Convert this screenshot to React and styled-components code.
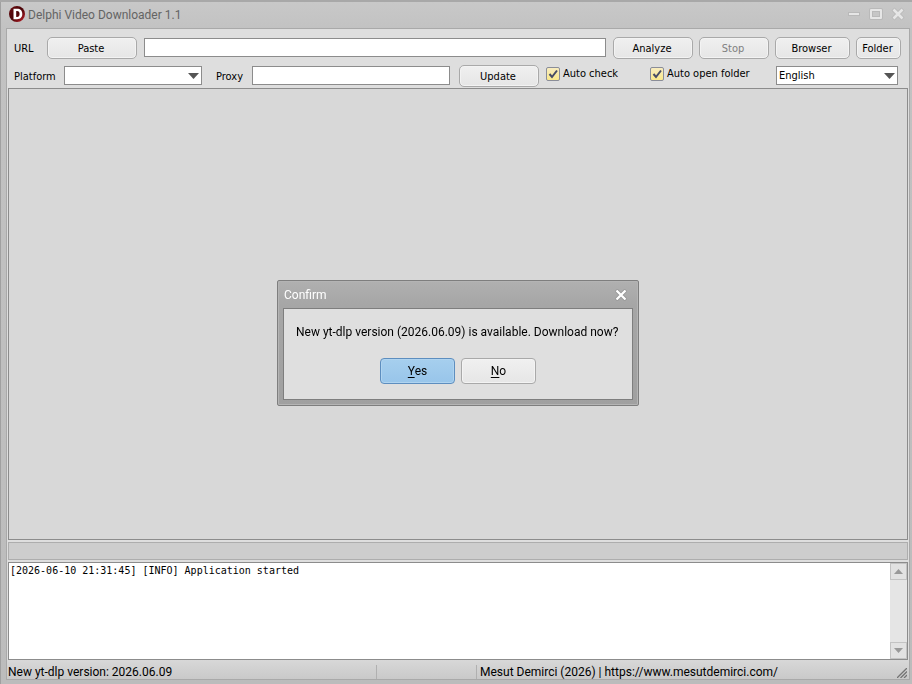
import React, { useState } from 'react';
import styled, { createGlobalStyle } from 'styled-components';

const App = () => {
  const [confirmOpen, setConfirmOpen] = useState(true);

  return (
    <Frame>
      <GlobalStyle />
      <TitleBar>
        <LogoIcon />
        <Title>Delphi Video Downloader 1.1</Title>
        <WindowButtons />
      </TitleBar>
      <Client>
        <Toolbar />
        <VideoList />
        <ProgressBar />
        <Log />
        <StatusBar>
          <StatusText>New yt-dlp version: 2026.06.09</StatusText>
          <StatusGap />
          <StatusCredit>
            Mesut Demirci (2026) | https://www.mesutdemirci.com/
          </StatusCredit>
          <SizeGrip />
        </StatusBar>
      </Client>
      {confirmOpen && <ConfirmDialog onClose={() => setConfirmOpen(false)} />}
    </Frame>
  );
};

export default App;

const Toolbar = () => (
  <Tools>
    <UrlRow>
      <ToolLabel htmlFor="url" $width={27}>
        URL
      </ToolLabel>
      <Button $width={90}>Paste</Button>
      <UrlInput id="url" type="text" />
      <Button $width={80}>Analyze</Button>
      <Button $width={70} disabled>
        Stop
      </Button>
      <Button $width={75}>Browser</Button>
      <Button $width={45}>Folder</Button>
    </UrlRow>
    <OptionRow>
      <ToolLabel htmlFor="platform" $width={50}>
        Platform
      </ToolLabel>
      <PlatformBox>
        <Select id="platform" defaultValue="">
          <option value="" aria-label="Any platform" />
        </Select>
        <ArrowIcon />
      </PlatformBox>
      <ToolLabel htmlFor="proxy" $width={36}>
        Proxy
      </ToolLabel>
      <ProxyInput id="proxy" type="text" />
      <Button $width={80}>Update</Button>
      <CheckOption $width={97}>
        <CheckBox type="checkbox" defaultChecked />
        <CheckIcon />
        Auto check
      </CheckOption>
      <CheckOption $width={110}>
        <CheckBox type="checkbox" defaultChecked />
        <CheckIcon />
        Auto open folder
      </CheckOption>
      <LanguageBox>
        <Select aria-label="Language" defaultValue="English">
          <option>English</option>
        </Select>
        <ArrowIcon />
      </LanguageBox>
    </OptionRow>
  </Tools>
);

const Log = () => (
  <LogBox>
    <LogText
      aria-label="Log"
      readOnly
      value="[2026-06-10 21:31:45] [INFO] Application started"
    />
    <ScrollBar>
      <ScrollButton aria-label="Scroll up">
        <svg width="9" height="5" viewBox="0 0 9 5">
          <path d="M4.5 0L9 5H0z" fill="#999" />
        </svg>
      </ScrollButton>
      <ScrollButton aria-label="Scroll down">
        <svg width="9" height="5" viewBox="0 0 9 5">
          <path d="M4.5 5L9 0H0z" fill="#999" />
        </svg>
      </ScrollButton>
    </ScrollBar>
  </LogBox>
);

const ConfirmDialog = ({ onClose }) => (
  <Overlay>
    <Dialog role="dialog" aria-labelledby="confirm-title">
      <DialogHeader>
        <DialogTitle id="confirm-title">Confirm</DialogTitle>
        <DialogClose aria-label="Close" onClick={onClose}>
          <svg width="12" height="12" viewBox="0 0 12 12">
            <path d="M1 1l10 10M11 1L1 11" stroke="#8c8c8c" strokeWidth="4" opacity="0.6" />
            <path d="M1.5 1.5l9 9M10.5 1.5l-9 9" stroke="#fff" strokeWidth="2.3" />
          </svg>
        </DialogClose>
      </DialogHeader>
      <DialogBody>
        <DialogMessage>
          New yt-dlp version (2026.06.09) is available. Download now?
        </DialogMessage>
        <DialogActions>
          <DialogButton $primary onClick={onClose}>
            <u>Y</u>es
          </DialogButton>
          <DialogButton onClick={onClose}>
            <u>N</u>o
          </DialogButton>
        </DialogActions>
      </DialogBody>
    </Dialog>
  </Overlay>
);

const WindowButtons = () => (
  <WindowButtonGroup>
    <WindowButton aria-label="Minimize">
      <svg width="14" height="14" viewBox="0 0 14 14">
        <path d="M1 7h12" stroke="#b9b9b9" strokeWidth="4" />
        <path d="M2 7h10" stroke="#e6e6e6" strokeWidth="2" />
      </svg>
    </WindowButton>
    <WindowButton aria-label="Maximize">
      <svg width="14" height="14" viewBox="0 0 14 14">
        <rect x="2" y="3" width="10" height="8" fill="#c6c6c6" stroke="#b9b9b9" strokeWidth="4" strokeLinejoin="round" />
        <rect x="2" y="3" width="10" height="8" fill="none" stroke="#e6e6e6" strokeWidth="2" strokeLinejoin="round" />
      </svg>
    </WindowButton>
    <WindowButton aria-label="Close">
      <svg width="14" height="14" viewBox="0 0 14 14">
        <path d="M2 2l10 10M12 2L2 12" stroke="#b9b9b9" strokeWidth="4.5" />
        <path d="M2.5 2.5l9 9M11.5 2.5l-9 9" stroke="#e6e6e6" strokeWidth="2.6" />
      </svg>
    </WindowButton>
  </WindowButtonGroup>
);

const LogoIcon = () => (
  <svg width="16" height="16" viewBox="0 0 16 16">
    <defs>
      <linearGradient id="logo" x1="0" y1="0" x2="1" y2="1">
        <stop offset="0" stopColor="#6a0c10" />
        <stop offset="0.5" stopColor="#4a0508" />
        <stop offset="1" stopColor="#c8202a" />
      </linearGradient>
    </defs>
    <circle cx="8" cy="8" r="8" fill="url(#logo)" />
    <path
      d="M4.500 2.800h3.600c3.200 0 5.200 1.900 5.200 5.200s-2 5.200-5.200 5.200H4.500zM7.200 5v6h.9c1.600 0 2.500-1.100 2.500-3s-.9-3-2.500-3z"
      fill="#fff"
      fillRule="evenodd"
    />
  </svg>
);

const ArrowIcon = () => (
  <Arrow width="11" height="6" viewBox="0 0 11 6">
    <path d="M0 0h11L5.500 6z" fill="#555" />
  </Arrow>
);

const CheckIcon = () => (
  <CheckMark width="14" height="14" viewBox="0 0 14 14">
    <path
      d="M3.500 7l2.500 3 5-6.500"
      fill="none"
      stroke="#474c66"
      strokeWidth="2"
    />
  </CheckMark>
);

const SizeGrip = () => (
  <Grip width="10" height="10" viewBox="0 0 10 10">
    <path d="M0 10L10 0M3.500 10L10 3.500M7 10l3-3" stroke="#747474" strokeWidth="1.300" />
  </Grip>
);

const GlobalStyle = createGlobalStyle`
  * {
    box-sizing: border-box;
  }

  body {
    margin: 0;
    font-family: Roboto, 'Liberation Sans', sans-serif;
    font-size: 12px;
    line-height: 16px;
    color: #000;
  }

  button,
  input,
  select,
  textarea {
    margin: 0;
    padding: 0;
    font: inherit;
    color: inherit;
  }

  svg {
    display: block;
    flex: none;
  }
`;

const Frame = styled.div`
  display: flex;
  flex-direction: column;
  min-height: 100vh;
  padding: 0 2px 4px 6px;
  border-top: 2px solid #a8a8a8;
  background: linear-gradient(#c8c8c8, #c2c2c2 28px, #bcbcbc);
  box-shadow: inset 1px 0 #a0a0a0;
`;

const TitleBar = styled.header`
  display: flex;
  align-items: center;
  height: 26px;
  padding: 0 5px 2px 3px;
`;

const Title = styled.h1`
  flex: 1;
  margin: 0;
  padding: 2px 0 0 3px;
  font-size: 12px;
  font-weight: 400;
  color: #646464;
`;

const WindowButtonGroup = styled.div`
  display: flex;
  gap: 8px;
`;

const WindowButton = styled.button`
  border: 0;
  background: none;
`;

const Client = styled.main`
  flex: 1;
  display: flex;
  flex-direction: column;
  padding: 0 1px;
  border: 1px solid #a9a9a9;
  background: #dedede;
`;

const Tools = styled.div`
  padding: 8px 7px 1px 6px;
  font-family: 'DejaVu Sans Condensed', 'DejaVu Sans', sans-serif;
  font-size: 11px;
`;

const UrlRow = styled.div`
  display: flex;
  align-items: center;
  gap: 6px;
`;

const OptionRow = styled.div`
  display: flex;
  align-items: center;
  padding: 6px 3px 0 0;
`;

const ToolLabel = styled.label`
  flex: none;
  width: ${props => props.$width}px;
  padding-top: 2px;
`;

const TextInput = styled.input`
  height: 19px;
  min-width: 0;
  margin-bottom: 1px;
  padding: 0 3px;
  border: 1px solid #8c8c8c;
  background: #fff;
`;

const UrlInput = styled(TextInput)`
  flex: 1;
  margin: 0 1px 1px;
`;

const ProxyInput = styled(TextInput)`
  width: 198px;
  margin-right: 9px;
`;

const Button = styled.button`
  flex: none;
  width: ${props => props.$width}px;
  height: 22px;
  padding: 2px 2px 0 0;
  border: 1px solid #a9a9a9;
  border-radius: 5px;
  background: linear-gradient(#f0f0f0, #e6e6e6);
  box-shadow: inset 0 0 0 1px #f3f3f3;

  &:disabled {
    color: #808080;
  }
`;

const SelectBox = styled.div`
  position: relative;
  flex: none;
  height: 19px;
  margin-bottom: 1px;
`;

const PlatformBox = styled(SelectBox)`
  width: 138px;
  margin-right: 14px;
`;

const LanguageBox = styled(SelectBox)`
  width: 122px;
  margin-left: auto;
`;

const Select = styled.select`
  display: block;
  width: 100%;
  height: 100%;
  padding: 0 16px 0 2px;
  appearance: none;
  border: 1px solid #8c8c8c;
  border-radius: 0;
  background: #fff;
`;

const Arrow = styled.svg`
  position: absolute;
  top: 7px;
  right: 3px;
  pointer-events: none;
`;

const CheckOption = styled.label`
  position: relative;
  display: flex;
  align-items: center;
  gap: 3px;
  width: ${props => props.$width}px;
  margin: 0 0 4px 7px;
  white-space: nowrap;
`;

const CheckBox = styled.input`
  width: 14px;
  height: 14px;
  appearance: none;
  border: 1px solid #8a8d98;
  border-radius: 2px;
  background: linear-gradient(#f8ecc0, #fbe98a);

  &:not(:checked) + svg {
    display: none;
  }
`;

const CheckMark = styled.svg`
  position: absolute;
  left: 0;
  pointer-events: none;
`;

const VideoList = styled.section`
  flex: 1;
  min-height: 120px;
  border: 1px solid #8c8c8c;
  background: #d8d8d8;
`;

const ProgressBar = styled.div`
  height: 18px;
  margin: 2px 0;
  border: 1px solid #adadad;
  background: #cdcdcd;
`;

const LogBox = styled.section`
  display: flex;
  height: 98px;
  border: 1px solid #8c8c8c;
  background: #fff;
`;

const LogText = styled.textarea`
  flex: 1;
  padding: 1px;
  border: 0;
  outline: 0;
  resize: none;
  overflow: hidden;
  background: none;
  font-family: 'DejaVu Sans Mono', monospace;
  font-size: 10px;
  line-height: 14px;
`;

const ScrollBar = styled.div`
  display: flex;
  flex-direction: column;
  justify-content: space-between;
  width: 17px;
  background: #e5e5e5;
`;

const ScrollButton = styled.button`
  display: flex;
  align-items: center;
  justify-content: center;
  height: 17px;
  border: 1px solid #c3c3c3;
  background: #e2e2e2;
`;

const StatusBar = styled.footer`
  display: flex;
  align-items: center;
  height: 19px;
  margin: 0 -1px;
  padding-top: 4px;
  background: linear-gradient(#d8d8d8, #c9c9c9);
`;

const StatusText = styled.span`
  width: 369px;
  padding-left: 1px;
  white-space: nowrap;
`;

const StatusGap = styled.span`
  width: 101px;
  height: 14px;
  border: 1px solid #b0b0b0;
  border-width: 0 1px;
`;

const StatusCredit = styled.span`
  flex: 1;
  padding-left: 3px;
  white-space: nowrap;
`;

const Grip = styled.svg`
  align-self: flex-end;
  margin: 0 2px 1px 0;
`;

const Overlay = styled.div`
  position: fixed;
  inset: 0;
  display: flex;
  align-items: center;
  justify-content: center;
  padding: 2px 0 0 4px;
`;

const Dialog = styled.div`
  width: 362px;
  padding: 0 5px 5px;
  border: 1px solid #7e7e7e;
  border-radius: 2px;
  background: linear-gradient(#b0b0b0, #a6a6a6 24px, #a0a0a0);
  box-shadow: inset 0 0 0 1px #b4b4b4;
`;

const DialogHeader = styled.div`
  display: flex;
  align-items: center;
  justify-content: space-between;
  height: 27px;
  padding: 0 6px 0 1px;
`;

const DialogTitle = styled.h2`
  margin: 0;
  padding-top: 1px;
  font-size: 12px;
  font-weight: 400;
  color: #fff;
`;

const DialogClose = styled.button`
  border: 0;
  background: none;
`;

const DialogBody = styled.div`
  padding: 15px 12px;
  border: 1px solid #7e7e7e;
  background: #dfdfdf;
`;

const DialogMessage = styled.p`
  margin: 0 0 18px;
  white-space: nowrap;
`;

const DialogActions = styled.div`
  display: flex;
  justify-content: center;
  gap: 6px;
`;

const DialogButton = styled.button`
  width: 75px;
  height: 26px;
  border: 1px solid ${props => (props.$primary ? '#5d8ebf' : '#a9a9a9')};
  border-radius: 4px;
  background: ${props =>
    props.$primary
      ? 'linear-gradient(#a6cfee, #98c5ea)'
      : 'linear-gradient(#f0f0f0, #e6e6e6)'};
  box-shadow: inset 0 0 0 1px ${props => (props.$primary ? '#b0d4f0' : '#f3f3f3')};

  u {
    text-underline-offset: 2px;
  }
`;
